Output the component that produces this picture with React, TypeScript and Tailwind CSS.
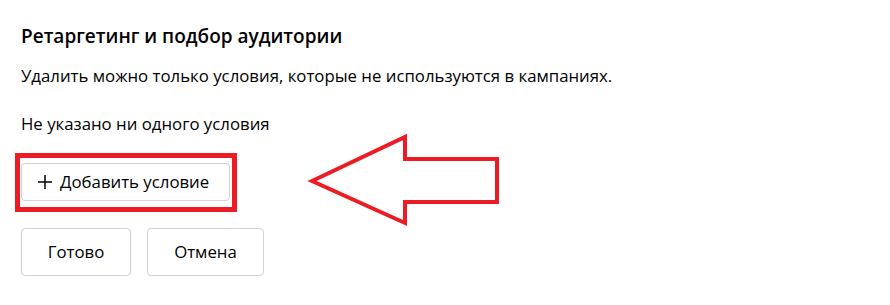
function Arrow() {
  return (
    <svg
      className="absolute left-[305px] top-[130px]"
      width="200"
      height="100"
      viewBox="305 130 200 100"
      aria-hidden>
      <polygon
        points="312,181 405,137 405,159 497,159 497,202 405,202 405,223"
        fill="none"
        stroke="#ed1c24"
        strokeWidth="4"
        strokeLinejoin="miter"
      />
    </svg>
  );
}

function PlusIcon() {
  return (
    <svg width="14" height="14" viewBox="0 0 14 14" aria-hidden>
      <path d="M7 0v14M0 7h14" stroke="#000" strokeWidth="1.5" />
    </svg>
  );
}

export default function App() {
  return (
    <div className="relative h-[305px] w-[890px] bg-white pl-[21px] pt-6 font-['Open_Sans',sans-serif] text-black">
      <h2 className="text-[19px] font-semibold leading-6">
        Ретаргетинг и подбор аудитории
      </h2>
      <p className="mt-4 text-[16.8px] leading-6">
        Удалить можно только условия, которые не используются в кампаниях.
      </p>
      <p className="mt-6 text-[16.8px] leading-6">Не указано ни одного условия</p>

      <div className="ml-[-6px] mt-[17px] w-fit border-[5px] border-[#ed1c24] pb-[6px] pl-px pr-[2px] pt-[5px]">
        <button
          type="button"
          className="flex h-[38px] w-[209px] items-center gap-2 rounded-[4px] border border-[#d3d3d3] bg-white pl-4 text-[16.8px]">
          <PlusIcon />
          Добавить условие
        </button>
      </div>

      <div className="mt-4 flex gap-4">
        <button
          type="button"
          className="h-[48px] w-[110px] rounded-[4px] border border-[#d3d3d3] bg-white text-[16.8px]">
          Готово
        </button>
        <button
          type="button"
          className="h-[48px] w-[117px] rounded-[4px] border border-[#d3d3d3] bg-white text-[16.8px]">
          Отмена
        </button>
      </div>

      <Arrow />
    </div>
  );
}
